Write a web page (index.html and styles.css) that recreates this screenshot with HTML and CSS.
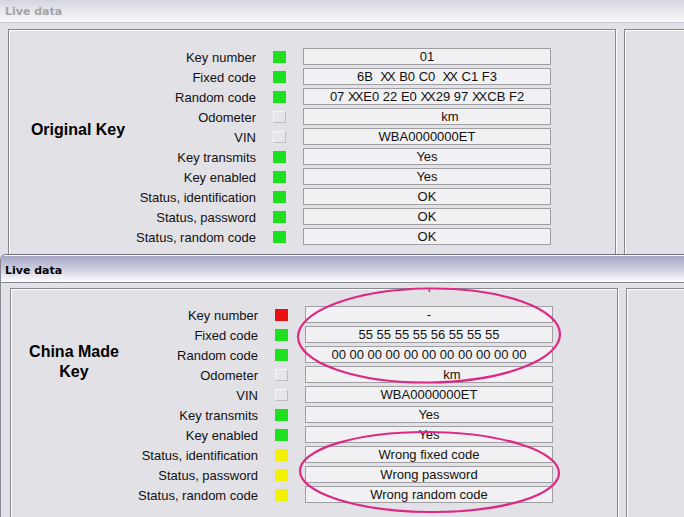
FILE: index.html
```html
<!DOCTYPE html>
<html>
<head>
<meta charset="utf-8">
<link rel="stylesheet" href="styles.css">
</head>
<body>
<div class="win win1">
  <div class="title">Live data</div>
  <div class="wbody">
    <div class="group">
      <div class="keyname kn1">Original Key</div>
      <div class="rows">
        <div class="row"><span class="label">Key number</span><span class="ind green"></span><span class="val">01</span></div>
        <div class="row"><span class="label">Fixed code</span><span class="ind green"></span><span class="val">6B&nbsp; <span class="xx">XX</span> B0 C0&nbsp; <span class="xx">XX</span> C1 F3</span></div>
        <div class="row"><span class="label">Random code</span><span class="ind green"></span><span class="val">07 <span class="xx">XX</span>E0 22 E0 <span class="xx">XX</span>29 97 <span class="xx">XX</span>CB F2</span></div>
        <div class="row"><span class="label">Odometer</span><span class="ind grey"></span><span class="val"><span class="km">km</span></span></div>
        <div class="row"><span class="label">VIN</span><span class="ind grey"></span><span class="val">WBA0000000ET</span></div>
        <div class="row"><span class="label">Key transmits</span><span class="ind green"></span><span class="val">Yes</span></div>
        <div class="row"><span class="label">Key enabled</span><span class="ind green"></span><span class="val">Yes</span></div>
        <div class="row"><span class="label">Status, identification</span><span class="ind green"></span><span class="val">OK</span></div>
        <div class="row"><span class="label">Status, password</span><span class="ind green"></span><span class="val">OK</span></div>
        <div class="row"><span class="label">Status, random code</span><span class="ind green"></span><span class="val">OK</span></div>
      </div>
    </div>
    <div class="side"></div>
  </div>
</div>
<div class="win win2">
  <div class="title">Live data</div>
  <div class="wbody">
    <div class="group">
      <div class="keyname kn2">China Made<br>Key</div>
      <div class="rows">
        <div class="row"><span class="label">Key number</span><span class="ind red"></span><span class="val">-</span></div>
        <div class="row"><span class="label">Fixed code</span><span class="ind green"></span><span class="val">55 55 55 55 56 55 55 55</span></div>
        <div class="row"><span class="label">Random code</span><span class="ind green"></span><span class="val">00 00 00 00 00 00 00 00 00 00 00</span></div>
        <div class="row"><span class="label">Odometer</span><span class="ind grey"></span><span class="val"><span class="km">km</span></span></div>
        <div class="row"><span class="label">VIN</span><span class="ind grey"></span><span class="val">WBA0000000ET</span></div>
        <div class="row"><span class="label">Key transmits</span><span class="ind green"></span><span class="val">Yes</span></div>
        <div class="row"><span class="label">Key enabled</span><span class="ind green"></span><span class="val">Yes</span></div>
        <div class="row"><span class="label">Status, identification</span><span class="ind yellow"></span><span class="val">Wrong fixed code</span></div>
        <div class="row"><span class="label">Status, password</span><span class="ind yellow"></span><span class="val">Wrong password</span></div>
        <div class="row"><span class="label">Status, random code</span><span class="ind yellow"></span><span class="val">Wrong random code</span></div>
      </div>
    </div>
    <div class="side"></div>
  </div>
</div>
<svg class="marks" width="684" height="517" viewBox="0 0 684 517" xmlns="http://www.w3.org/2000/svg">
  <ellipse cx="429" cy="335.5" rx="131" ry="47" fill="none" stroke="#dc2a84" stroke-width="2.2" transform="rotate(-0.6 429 335.5)"/>
  <path d="M429 288 L429.5 292" stroke="#dc2a84" stroke-width="1.5" fill="none"/>
  <ellipse cx="429.5" cy="472" rx="129.5" ry="40" fill="none" stroke="#dc2a84" stroke-width="2.2" transform="rotate(0.5 429.5 472)"/>
</svg>
</body>
</html>
```
FILE: styles.css
```css
* { box-sizing: border-box; }
html, body { margin: 0; padding: 0; }
body {
  width: 684px;
  height: 517px;
  overflow: hidden;
  position: relative;
  background: #e2e1e6;
  font-family: "Liberation Sans", Arial, sans-serif;
  font-size: 13px;
  color: #111;
}
.win { overflow: hidden; background: #e2e1e6; }
.win1 { height: 254px; }
.win2 {
  height: 263px;
  border-top: 1px solid #6c6c7c;
  border-left: 1px solid #8a8a96;
  border-top-left-radius: 6px;
}
.title {
  font-family: "DejaVu Sans", Verdana, sans-serif;
  font-weight: bold;
  font-size: 11px;
  padding-left: 5px;
}
.win1 .title {
  height: 23px;
  line-height: 23px;
  color: #a3a3a9;
  background: linear-gradient(#d5d5df, #fafafb);
  border-bottom: 1px solid #c8c8d0;
}
.win2 .title {
  height: 28px;
  padding-top: 4px;
  line-height: 22px;
  padding-left: 4px;
  color: #000;
  background: linear-gradient(#a8a8c6, #c9c9dc 45%, #ffffff);
  border-top: 1px solid #ffffff;
  border-bottom: 1px solid #858595;
}
.wbody { display: flex; gap: 8px; }
.win1 .wbody { padding: 6px 0 0 8px; }
.win2 .wbody { padding: 5px 0 0 9px; }
.group {
  width: 608px;
  flex: none;
  height: 300px;
  display: flex;
  align-items: flex-start;
  border: 1px solid #87878f;
  box-shadow: inset 1px 1px 0 #fff, 1px 1px 0 #fff;
}
.win1 .group { padding-top: 18px; }
.win2 .group { padding-top: 17px; }
.side {
  flex: none;
  width: 120px;
  height: 300px;
  border: 1px solid #87878f;
  box-shadow: inset 1px 1px 0 #fff;
}
.keyname {
  width: 124px;
  flex: none;
  font-weight: bold;
  font-size: 16px;
  line-height: 20px;
  text-align: center;
  color: #000;
}
.kn1 { margin-top: 72px; padding-left: 14px; }
.kn2 { margin-top: 36px; padding-left: 2px; }
.rows { display: flex; flex-direction: column; gap: 3px; }
.row { display: flex; align-items: center; height: 17px; }
.label {
  width: 123px;
  text-align: right;
  white-space: nowrap;
  line-height: 17px;
  margin-top: 2px;
}
.ind { width: 13px; height: 12px; margin-left: 17px; flex: none; }
.green { background: #1ee01e; }
.red { background: #e81010; }
.yellow { background: #f2f200; }
.grey {
  background: #e6e6ea;
  border: 1px solid #bdbdc2;
  border-top-color: #f6f6f8;
  border-left-color: #f6f6f8;
}
.val {
  width: 248px;
  height: 17px;
  margin-left: 17px;
  flex: none;
  border: 1px solid #9e9ea3;
  background: #f1f1f3;
  text-align: center;
  line-height: 15px;
  white-space: nowrap;
}
.xx { letter-spacing: -2px; margin-right: 2px; }
.km { padding-left: 46px; }
.marks { position: absolute; left: 0; top: 0; pointer-events: none; }
```
